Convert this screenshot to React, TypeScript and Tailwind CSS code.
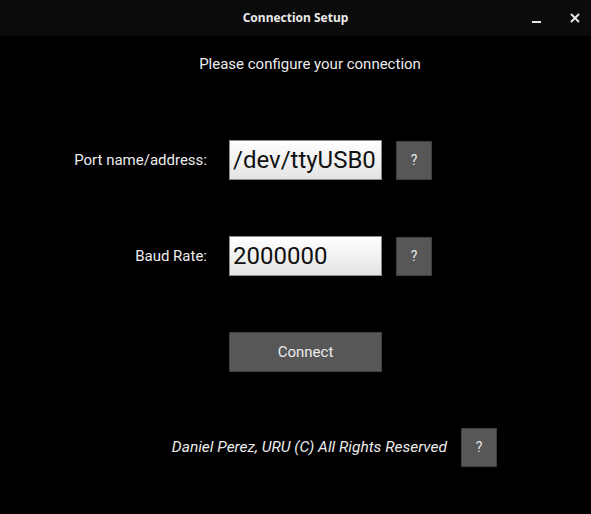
import React, { useState } from 'react';

const font = { fontFamily: 'Roboto, "Liberation Sans", sans-serif' };

function HelpButton() {
  return (
    <button className="w-[36px] h-[39px] bg-[#575757] border border-[#404040] text-[#e8e8e8] text-[14px] flex items-center justify-center shrink-0">
      ?
    </button>
  );
}

function Field({ label, value }: { label: string; value: string }) {
  const [text, setText] = useState(value);
  return (
    <div className="flex items-center h-[40px]">
      <div className="w-[207px] text-right text-[15px] text-[#ececec]">{label}</div>
      <input
        value={text}
        onChange={(e) => setText(e.target.value)}
        className="ml-[22px] w-[153px] h-[40px] border border-[#8a8a8a] bg-gradient-to-b from-white to-[#e4e4e4] text-[24px] text-[#111] pl-[3px] outline-none"
      />
      <div className="ml-[14px]">
        <HelpButton />
      </div>
    </div>
  );
}

export default function App() {
  return (
    <div className="w-[591px] h-[514px] bg-black flex flex-col" style={font}>
      {/* Title bar */}
      <div className="h-[36px] bg-[#0b0b0b] relative flex items-center justify-center shrink-0">
        <span
          className="text-[12px] font-bold text-[#eaeaea]"
          style={{ fontFamily: '"Noto Sans", "Open Sans", sans-serif' }}
        >
          Connection Setup
        </span>
        <div className="absolute right-[11px] top-0 h-full flex items-center gap-[28px]">
          <svg width="10" height="10" viewBox="0 0 10 10" className="mt-[2px]">
            <rect x="0" y="7" width="9" height="2" fill="#e6e6e6" />
          </svg>
          <svg width="10" height="10" viewBox="0 0 10 10">
            <path d="M1 1 L9 9 M9 1 L1 9" stroke="#e6e6e6" strokeWidth="2" />
          </svg>
        </div>
      </div>

      {/* Body */}
      <div className="flex flex-col">
        <div className="text-center text-[15px] text-[#ececec] mt-[20px] leading-[16px] pl-[29px]">
          Please configure your connection
        </div>

        <div className="mt-[68px]">
          <Field label="Port name/address:" value="/dev/ttyUSB0" />
        </div>
        <div className="mt-[56px]">
          <Field label="Baud Rate:" value="2000000" />
        </div>

        <div className="mt-[56px] pl-[229px]">
          <button className="w-[153px] h-[40px] bg-[#575757] border border-[#404040] text-[15px] text-[#ececec]">
            Connect
          </button>
        </div>

        <div className="mt-[56px] flex items-center justify-end pr-[94px]">
          <span className="italic text-[15.5px] text-[#ececec]">
            Daniel Perez, URU (C) All Rights Reserved
          </span>
          <div className="ml-[14px]">
            <HelpButton />
          </div>
        </div>
      </div>
    </div>
  );
}
